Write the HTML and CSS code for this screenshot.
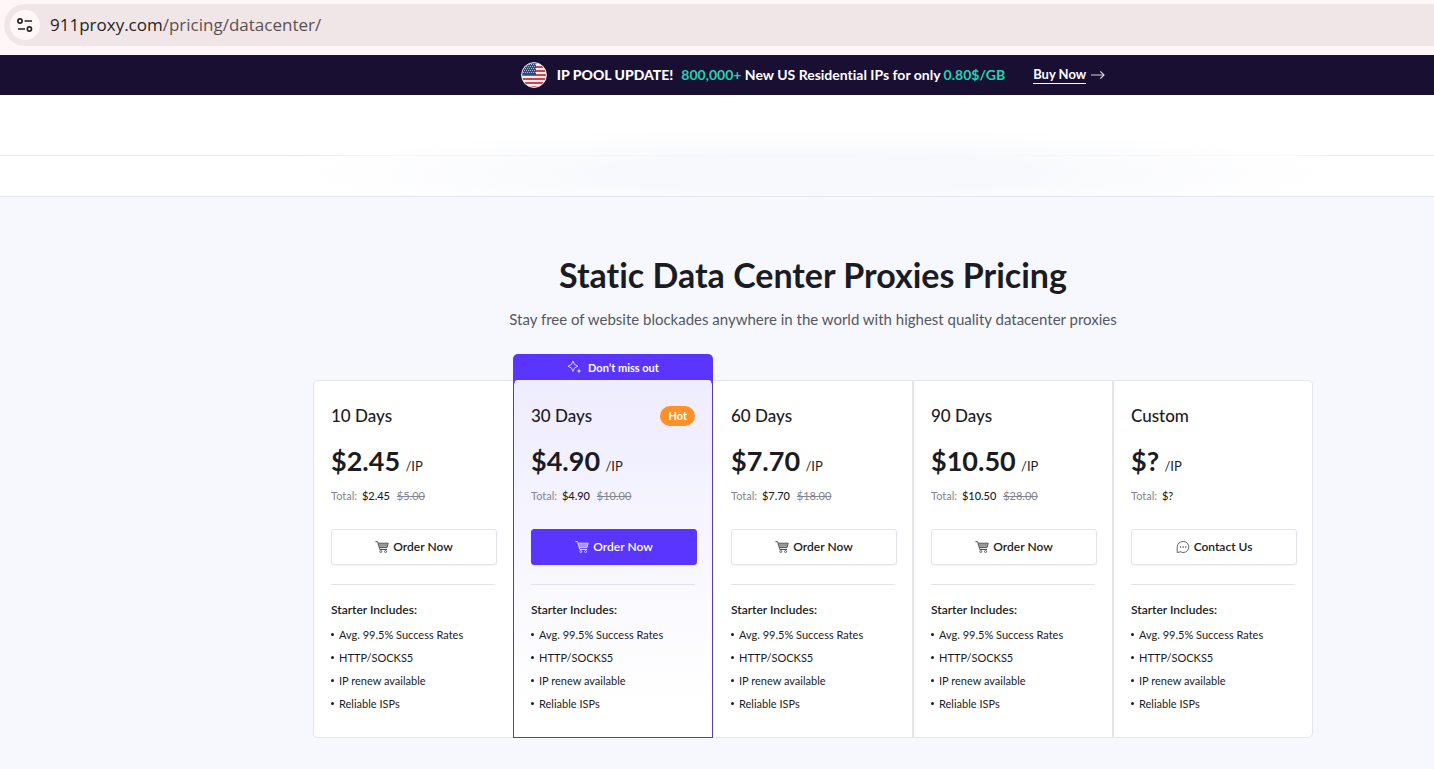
FILE: index.html
```html
<!DOCTYPE html>
<html lang="en">
<head>
<meta charset="utf-8">
<title>Static Data Center Proxies Pricing</title>
<link rel="stylesheet" href="styles.css">
</head>
<body>
<svg class="sprite" aria-hidden="true">
  <symbol id="cart" viewBox="0 0 14 12">
    <path d="M.4.7h2.2l2.2 7.800h7.300M3.100 2.200h10.100l-1.200 4.500H4.400" fill="none" stroke="currentColor" stroke-width="1"/>
    <path d="M3.300 2.400h9.700l-1.200 4.100H4.500z" fill="currentColor" opacity=".6"/>
    <circle cx="5.800" cy="10.500" r="1" fill="none" stroke="currentColor" stroke-width=".9"/>
    <circle cx="10.600" cy="10.500" r="1" fill="none" stroke="currentColor" stroke-width=".9"/>
  </symbol>
  <symbol id="chat" viewBox="0 0 14 12">
    <path d="M7.200.5a5.500 5.500 0 1 1-2.600 10.300L1.200 11.500V6A5.800 5.500 0 0 1 7.200.5z" fill="none" stroke="currentColor" stroke-width=".9"/>
    <circle cx="4.600" cy="6" r=".8" fill="currentColor"/><circle cx="7.200" cy="6" r=".8" fill="currentColor"/><circle cx="9.800" cy="6" r=".8" fill="currentColor"/>
  </symbol>
</svg>

<div class="browser-bar">
  <div class="address">
    <button class="site-info" aria-label="View site information">
      <svg width="16" height="14" viewBox="0 0 16 14" fill="none" stroke="#2b2324" stroke-width="1.7"><circle cx="3" cy="3" r="2.1"/><path d="M7.6 3H15M1 11h7"/><circle cx="12.4" cy="11" r="2.1"/></svg>
    </button>
    <span class="url"><span class="host">911proxy.com</span>/pricing/datacenter/</span>
  </div>
</div>

<div class="banner">
  <svg class="flag" width="26" height="26" viewBox="0 0 26 26" role="img" aria-label="United States">
    <defs><clipPath id="round"><circle cx="13" cy="13" r="12.3"/></clipPath></defs>
    <g clip-path="url(#round)">
      <path fill="#f6eeee" d="M0 0h26v26H0z"/>
      <path stroke="#c9474c" stroke-width="2" d="M0 1h26M0 5h26M0 9h26M0 13h26M0 17h26M0 21h26M0 25h26"/>
      <path fill="#2f4a80" d="M0 0h15v13H0z"/>
      <path stroke="#a9b7d2" stroke-width="1" stroke-dasharray="1 1" d="M2 2.500h13M3 4.500h12M2 6.500h13M3 8.500h12M2 10.500h13"/>
    </g>
    <circle cx="13" cy="13" r="12.4" fill="none" stroke="#f1edf5" stroke-width="1"/>
  </svg>
  <strong class="update">IP POOL UPDATE!</strong>
  <span class="offer"><em>800,000+</em> New US Residential IPs for only <em>0.80$/GB</em></span>
  <a class="buy" href="#plans"><span>Buy Now</span>
    <svg width="14" height="10" viewBox="0 0 14 10" fill="none" stroke="#d6d2df" stroke-width="1.2"><path d="M0 5h13M9.300 1.300L13 5 9.300 8.700"/></svg>
  </a>
</div>

<header class="site-nav"><div class="nav-row"></div><div class="subnav-row"></div></header>

<main class="pricing">
  <h1>Static Data Center Proxies Pricing</h1>
  <p class="lead">Stay free of website blockades anywhere in the world with highest quality datacenter proxies</p>

  <div class="plans" id="plans">
    <section class="plan">
      <h2>10 Days</h2>
      <p class="price"><strong>$2.45</strong> <span>/IP</span></p>
      <p class="total">Total: <b>$2.45</b> <s>$5.00</s></p>
      <button class="order"><svg width="14" height="12"><use href="#cart"/></svg>Order Now</button>
      <hr>
      <h3>Starter Includes:</h3>
      <ul><li>Avg. 99.5% Success Rates</li><li>HTTP/SOCKS5</li><li>IP renew available</li><li>Reliable ISPs</li></ul>
    </section>
    <section class="plan featured">
      <div class="ribbon">
        <svg width="15" height="14" viewBox="0 0 15 14"><path d="M6 1Q6.600 5.400 11 6.200 6.600 7 6 11.400 5.400 7 1 6.200 5.400 5.400 6 1z" fill="none" stroke="#d6ceff" stroke-width="1"/><path d="M12 8.500l.6 1.900 1.900.6-1.900.6-.6 1.900-.6-1.900-1.900-.6 1.900-.6z" fill="#fff"/></svg>
        Don’t miss out
      </div>
      <div class="plan-head"><h2>30 Days</h2><span class="hot">Hot</span></div>
      <p class="price"><strong>$4.90</strong> <span>/IP</span></p>
      <p class="total">Total: <b>$4.90</b> <s>$10.00</s></p>
      <button class="order"><svg width="14" height="12"><use href="#cart"/></svg>Order Now</button>
      <hr>
      <h3>Starter Includes:</h3>
      <ul><li>Avg. 99.5% Success Rates</li><li>HTTP/SOCKS5</li><li>IP renew available</li><li>Reliable ISPs</li></ul>
    </section>
    <section class="plan">
      <h2>60 Days</h2>
      <p class="price"><strong>$7.70</strong> <span>/IP</span></p>
      <p class="total">Total: <b>$7.70</b> <s>$18.00</s></p>
      <button class="order"><svg width="14" height="12"><use href="#cart"/></svg>Order Now</button>
      <hr>
      <h3>Starter Includes:</h3>
      <ul><li>Avg. 99.5% Success Rates</li><li>HTTP/SOCKS5</li><li>IP renew available</li><li>Reliable ISPs</li></ul>
    </section>
    <section class="plan">
      <h2>90 Days</h2>
      <p class="price"><strong>$10.50</strong> <span>/IP</span></p>
      <p class="total">Total: <b>$10.50</b> <s>$28.00</s></p>
      <button class="order"><svg width="14" height="12"><use href="#cart"/></svg>Order Now</button>
      <hr>
      <h3>Starter Includes:</h3>
      <ul><li>Avg. 99.5% Success Rates</li><li>HTTP/SOCKS5</li><li>IP renew available</li><li>Reliable ISPs</li></ul>
    </section>
    <section class="plan">
      <h2>Custom</h2>
      <p class="price"><strong>$?</strong> <span>/IP</span></p>
      <p class="total">Total: <b>$?</b></p>
      <button class="order"><svg width="14" height="12"><use href="#chat"/></svg>Contact Us</button>
      <hr>
      <h3>Starter Includes:</h3>
      <ul><li>Avg. 99.5% Success Rates</li><li>HTTP/SOCKS5</li><li>IP renew available</li><li>Reliable ISPs</li></ul>
    </section>
  </div>
</main>
</body>
</html>
```
FILE: styles.css
```css
:root {
  --ink: #1b1c22;
  --line: #e5e5ef;
  --violet: #5a34ff;
  --inset: 192px;
}
* { box-sizing: border-box; }
body { margin: 0; background: #f6f8fd; color: var(--ink); font-family: Lato, "Open Sans", sans-serif; font-size: 12px; font-variant-ligatures: none; }
h1, h2, h3, p, ul { margin: 0; padding: 0; }
.sprite { position: absolute; width: 0; height: 0; }

.browser-bar { padding: 4px 0 9px 4px; background: #fff7f6; }
.address { display: flex; align-items: center; gap: 10px; height: 42px; padding-left: 6px; border-radius: 21px 0 0 21px; background: #f1e6e7; }
.site-info { display: grid; place-items: center; width: 30px; height: 30px; padding: 0; border: 0; border-radius: 50%; background: #fff8f7; }
.url { font: 17px/24px "Open Sans", "Noto Sans", sans-serif; color: #5c5052; }
.host { color: #251d1f; }

.banner { display: flex; align-items: center; justify-content: center; height: 40px; padding-left: var(--inset); background: #190f33; color: #fff; font-size: 14px; line-height: 20px; font-weight: 700; white-space: nowrap; }
.update { margin: 0 8px 0 10px; font-weight: 900; }
.offer em { font-style: normal; color: #23d3b0; }
.buy { display: flex; align-items: center; gap: 5px; margin-left: 28px; color: #fff; font-size: 13px; text-decoration: none; }
.buy span { line-height: 17px; border-bottom: 1px solid #fff; }

.site-nav { background: radial-gradient(ellipse 36% 46% at 57% 78%, #f8f9fc 40%, #fff 100%); border-bottom: 1px solid var(--line); }
.nav-row { height: 61px; border-bottom: 1px solid; border-image: linear-gradient(90deg, #e7e7ea 20%, #f5f6fa 27%, #f8f9fc 90%, #e7e7ea 94%) 1; }
.subnav-row { height: 40px; }

.pricing { padding: 55px 0 31px var(--inset); text-align: center; }
h1 { font-size: 34px; line-height: 46px; font-weight: 700; }
.lead { margin-top: 9px; font-size: 15px; line-height: 24px; color: #555762; }

.plans { display: grid; grid-template-columns: repeat(5, 1fr); max-width: 1000px; margin: 49px auto 0; text-align: left; isolation: isolate; }
.plan { position: relative; padding: 24px 15px 22px 17px; border: 1px solid var(--line); background: #fff; }
.plan:first-child { padding-right: 16px; border-radius: 5px 0 0 5px; border-right: 0; }
.plan:last-child { border-radius: 0 5px 5px 0; }
.featured { border-color: #583bb5; border-top-color: #eeecff; border-radius: 5px 5px 0 0; background: linear-gradient(#eeecff, #fff 90%); }
.featured + .plan { border-left-color: #fff; }
.ribbon { position: absolute; z-index: -1; left: -1px; right: -1px; top: -27px; display: flex; align-items: center; justify-content: center; gap: 6px; height: 32px; padding-bottom: 6px; border-radius: 5px 5px 0 0; background: var(--violet); color: #fff; font-size: 11px; font-weight: 700; }
.plan-head { display: flex; justify-content: space-between; align-items: center; padding-right: 2px; }
h2 { font-size: 17px; line-height: 22px; font-weight: 500; }
.hot { padding: 0 8px; border-radius: 10px; background: #ff9126; color: #fff; font-size: 11px; line-height: 20px; font-weight: 700; }
.price { margin-top: 18px; line-height: 32px; font-size: 13px; }
.price strong { font-size: 27px; font-weight: 700; margin-right: 2px; }
.total { margin-top: 4px; font-size: 11px; line-height: 20px; color: #85868e; }
.total b { margin: 0 4px 0 2px; font-weight: 500; color: var(--ink); }
.order { display: flex; align-items: center; justify-content: center; gap: 4px; width: 100%; height: 36px; margin-top: 23px; padding: 0; border: 1px solid #e4e5ea; border-radius: 3px; background: #fff; box-shadow: 0 1px 2px #0000000d; color: var(--ink); font: 600 12px/18px Lato, "Open Sans", sans-serif; }
.order svg { color: #555; }
.featured .order { border-color: var(--violet); background: var(--violet); color: #fff; }
.featured .order svg { color: #ddd6ff; }
hr { height: 1px; margin: 19px 2px 15px 0; border: 0; background: #e3e4eb; }
h3 { font-size: 12px; line-height: 20px; font-weight: 600; }
ul { margin-top: 3px; list-style: none; font-size: 11px; line-height: 23px; }
li { display: flex; align-items: center; gap: 5px; }
li::before { content: ""; width: 3px; height: 3px; border-radius: 50%; background: var(--ink); }
```
